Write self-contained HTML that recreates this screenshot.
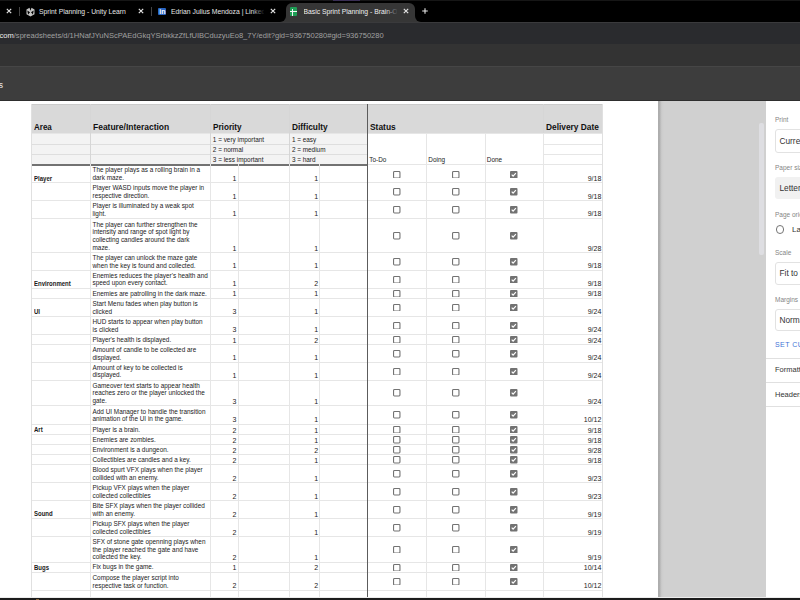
<!DOCTYPE html>
<html><head><meta charset="utf-8"><title>Print preview</title>
<style>
*{margin:0;padding:0;box-sizing:border-box}
html,body{width:800px;height:600px;overflow:hidden;background:#fff}
body{position:relative;font-family:"Liberation Sans",sans-serif}
.a{position:absolute}
.t{position:absolute;white-space:nowrap;overflow:visible}
.cbx{width:7.4px;height:7.4px;border:1.1px solid #7a7a7a;border-radius:1.2px;background:#fff}
.cbx.on{background:#6b6b6b;border-color:#6b6b6b}
</style></head>
<body>
<!-- tab strip -->
<div class="a" style="left:0;top:0;width:800px;height:22px;background:#000"></div>
<div class="a" style="left:0;top:0;width:800px;height:1px;background:#161616"></div>
<div class="a" style="left:333px;top:0;width:27px;height:1px;background:#3a2f55"></div>
<!-- active tab -->
<div class="a" style="left:286px;top:3px;width:128.5px;height:19.5px;background:#363636;border-radius:6px 6px 0 0"></div>
<div class="a" style="left:280px;top:16px;width:6px;height:6px;background:#363636"></div>
<div class="a" style="left:280px;top:16px;width:6px;height:6px;background:#000;border-radius:0 0 6px 0"></div>
<div class="a" style="left:414.5px;top:16px;width:6px;height:6px;background:#363636"></div>
<div class="a" style="left:414.5px;top:16px;width:6px;height:6px;background:#000;border-radius:0 0 0 6px"></div>
<!-- tab 1 -->
<svg class="a" style="left:6px;top:8.3px" width="6" height="6" viewBox="0 0 6 6"><path d="M0.8 0.8 L5.2 5.2 M5.2 0.8 L0.8 5.2" stroke="#e4e4e4" stroke-width="1.15"/></svg>
<div class="a" style="left:19px;top:7px;width:1px;height:9px;background:#444"></div>
<svg class="a" style="left:25.6px;top:6.5px" width="9" height="10" viewBox="0 0 9 10"><path fill="#c4c4c4" fill-rule="evenodd" d="M3.5 0.8 L0.5 2.5 L0.5 7.2 L4.5 9.5 L8.5 7.2 L8.5 2.5 L5.5 0.8 L4.5 3.7 Z M1.3 3.5 L4.0 5.2 L2.1 7.4 Z M7.7 3.5 L5.0 5.2 L6.9 7.4 Z"/></svg>
<div class="t" style="left:39px;top:6.6px;font-size:6.8px;line-height:10px;color:#e6e6e6">Sprint Planning - Unity Learn</div>
<svg class="a" style="left:138px;top:8.3px" width="6" height="6" viewBox="0 0 6 6"><path d="M0.8 0.8 L5.2 5.2 M5.2 0.8 L0.8 5.2" stroke="#e4e4e4" stroke-width="1.15"/></svg>
<div class="a" style="left:151px;top:7px;width:1px;height:9px;background:#444"></div>
<!-- linkedin -->
<div class="a" style="left:158px;top:7.5px;width:8px;height:7.5px;background:#2a66c2;border-radius:1px"></div>
<div class="t" style="left:159.2px;top:6.8px;font-size:7px;line-height:9px;color:#fff;font-weight:bold">in</div>
<div class="t" style="left:171px;top:6.6px;font-size:6.8px;line-height:10px;color:#e6e6e6;width:93px;overflow:hidden">Edrian Julius Mendoza | LinkedIn</div>
<div class="a" style="left:252px;top:5px;width:13px;height:13px;background:linear-gradient(90deg,rgba(0,0,0,0),#000)"></div>
<svg class="a" style="left:270px;top:8.3px" width="6" height="6" viewBox="0 0 6 6"><path d="M0.8 0.8 L5.2 5.2 M5.2 0.8 L0.8 5.2" stroke="#e4e4e4" stroke-width="1.15"/></svg>
<!-- sheets icon -->
<div class="a" style="left:289.5px;top:7px;width:7.5px;height:9px;background:#1e9e55;border-radius:1px"></div>
<div class="a" style="left:289.5px;top:11px;width:7.5px;height:1.1px;background:#f4f4f4"></div>
<div class="a" style="left:292.2px;top:8.5px;width:1.1px;height:7px;background:#f4f4f4"></div>
<div class="t" style="left:303.5px;top:6.6px;font-size:6.8px;line-height:10px;color:#f0f0f0;width:93px;overflow:hidden">Basic Sprint Planning - Brain-Out</div>
<div class="a" style="left:386px;top:5px;width:12px;height:13px;background:linear-gradient(90deg,rgba(54,54,54,0),#363636)"></div>
<svg class="a" style="left:402.5px;top:8px" width="6" height="6" viewBox="0 0 6 6"><path d="M0.8 0.8 L5.2 5.2 M5.2 0.8 L0.8 5.2" stroke="#e4e4e4" stroke-width="1.15"/></svg>
<svg class="a" style="left:422.4px;top:8px" width="6" height="6" viewBox="0 0 6 6"><path d="M0.2 3 L5.8 3 M3 0.2 L3 5.8" stroke="#e8e8e8" stroke-width="1.1"/></svg>
<!-- address row -->
<div class="a" style="left:0;top:22px;width:800px;height:21.5px;background:#2a2b2e"></div>
<div class="a" style="left:0;top:21.5px;width:800px;height:1.2px;background:#3a3a3c"></div>
<div class="t" style="left:-0.5px;top:31px;font-size:7.55px;line-height:9px;color:#a0a0a0"><span style="color:#f0f0f0">com</span>/spreadsheets/d/1HNafJYuNScPAEdGkqYSrbkkzZfLfUIBCduzyuEo8_7Y/edit?gid=936750280#gid=936750280</div>
<!-- bookmarks row -->
<div class="a" style="left:0;top:43.5px;width:800px;height:22.5px;background:#333333"></div>
<!-- sheets print header -->
<div class="a" style="left:0;top:66px;width:800px;height:34.5px;background:#3d3d3d"></div>
<div class="a" style="left:0;top:65.5px;width:800px;height:1.2px;background:#464646"></div>
<div class="a" style="left:0;top:99.5px;width:800px;height:1.2px;background:#2e2e2e"></div>
<div class="t" style="left:-1.2px;top:79.5px;font-size:8.5px;line-height:10px;color:#eee">s</div>
<!-- gray preview area & panel -->
<div class="a" style="left:658px;top:100.7px;width:108px;height:497px;background:#d0d0d0"></div>
<div class="a" style="left:658px;top:100.7px;width:6px;height:497px;background:linear-gradient(90deg,#acacac 0,#b0b0b0 1.8px,#c6c6c6 3px,#cdcdcd 4.5px,#d0d0d0 6px)"></div>
<div class="a" style="left:758.5px;top:123px;width:5.5px;height:132px;background:#dedee2;border-radius:2px"></div>
<div class="a" style="left:766px;top:100.7px;width:34px;height:497px;background:#fff"></div>
<div class="t" style="left:775px;top:116px;font-size:6.5px;line-height:8px;color:#858585">Print</div>
<div class="a" style="left:775px;top:129px;width:40px;height:23.5px;border:1px solid #e2e2e2;border-radius:3px;background:#fff"></div>
<div class="t" style="left:779.5px;top:136px;font-size:8.3px;line-height:10px;color:#333">Current sheet</div>
<div class="t" style="left:775px;top:164px;font-size:6.5px;line-height:8px;color:#858585">Paper size</div>
<div class="a" style="left:775px;top:176.5px;width:40px;height:22.5px;border-radius:3px;background:#f1f1f1"></div>
<div class="t" style="left:779.5px;top:183px;font-size:8.3px;line-height:10px;color:#333">Letter (8.5" x 11")</div>
<div class="t" style="left:775px;top:211px;font-size:6.5px;line-height:8px;color:#858585">Page orientation</div>
<div class="a" style="left:775.8px;top:225.2px;width:8.6px;height:8.6px;border:1px solid #757575;border-radius:50%"></div>
<div class="t" style="left:792px;top:224.5px;font-size:8px;line-height:10px;color:#333">Landscape</div>
<div class="t" style="left:775px;top:249px;font-size:6.5px;line-height:8px;color:#858585">Scale</div>
<div class="a" style="left:775px;top:261.5px;width:40px;height:23px;border:1px solid #e2e2e2;border-radius:3px;background:#fff"></div>
<div class="t" style="left:779.5px;top:268px;font-size:8.3px;line-height:10px;color:#333">Fit to width</div>
<div class="t" style="left:775px;top:296px;font-size:6.5px;line-height:8px;color:#858585">Margins</div>
<div class="a" style="left:775px;top:308.5px;width:40px;height:22.5px;border:1px solid #e2e2e2;border-radius:3px;background:#fff"></div>
<div class="t" style="left:779.5px;top:315px;font-size:8.3px;line-height:10px;color:#333">Normal</div>
<div class="t" style="left:775px;top:339.5px;font-size:7px;line-height:9px;color:#3f74d6;letter-spacing:0.45px">SET CUSTOM</div>
<div class="a" style="left:766px;top:357.5px;width:34px;height:1px;background:#e0e0e0"></div>
<div class="t" style="left:775px;top:365px;font-size:7.5px;line-height:9px;color:#333">Formatting</div>
<div class="a" style="left:766px;top:381.5px;width:34px;height:1px;background:#e0e0e0"></div>
<div class="t" style="left:775px;top:389.5px;font-size:7.5px;line-height:9px;color:#333">Headers</div>
<div class="a" style="left:766px;top:405.5px;width:34px;height:1px;background:#e0e0e0"></div>
<!-- bottom taskbar -->
<div class="a" style="left:0;top:597px;width:800px;height:1px;background:#ececec;z-index:10"></div>
<div class="a" style="left:0;top:598px;width:800px;height:2px;background:#1c1c1c;z-index:10"></div>
<div class="a" style="left:36px;top:598.5px;width:3px;height:2px;background:#8a6a40;z-index:11"></div>

<div class="a" style="left:31.3px;top:104.3px;width:571.5px;height:28.7px;background:#d9d9d9;"></div>
<div class="a" style="left:31.3px;top:133px;width:336.2px;height:31.1px;background:#f3f3f3;"></div>
<div class="a" style="left:31.3px;top:104.3px;width:571.5px;height:0.8px;background:#cbcbcb;"></div>
<div class="a" style="left:31.3px;top:143.75px;width:336.2px;height:1px;background:#dedede;"></div>
<div class="a" style="left:543.4px;top:143.75px;width:59.4px;height:1px;background:#e6e6e6;"></div>
<div class="a" style="left:31.3px;top:153.65px;width:336.2px;height:1px;background:#dedede;"></div>
<div class="a" style="left:543.4px;top:153.65px;width:59.4px;height:1px;background:#e6e6e6;"></div>
<div class="a" style="left:31.3px;top:132.5px;width:571.5px;height:1px;background:#e6e6e6;"></div>
<div class="a" style="left:31.3px;top:182.45px;width:571.5px;height:1px;background:#e6e6e6;"></div>
<div class="a" style="left:31.3px;top:200px;width:571.5px;height:1px;background:#e6e6e6;"></div>
<div class="a" style="left:31.3px;top:217.9px;width:571.5px;height:1px;background:#e6e6e6;"></div>
<div class="a" style="left:31.3px;top:252px;width:571.5px;height:1px;background:#e6e6e6;"></div>
<div class="a" style="left:31.3px;top:269.9px;width:571.5px;height:1px;background:#e6e6e6;"></div>
<div class="a" style="left:31.3px;top:287.7px;width:571.5px;height:1px;background:#e6e6e6;"></div>
<div class="a" style="left:31.3px;top:297.8px;width:571.5px;height:1px;background:#e6e6e6;"></div>
<div class="a" style="left:31.3px;top:315.9px;width:571.5px;height:1px;background:#e6e6e6;"></div>
<div class="a" style="left:31.3px;top:333.8px;width:571.5px;height:1px;background:#e6e6e6;"></div>
<div class="a" style="left:31.3px;top:344px;width:571.5px;height:1px;background:#e6e6e6;"></div>
<div class="a" style="left:31.3px;top:361.9px;width:571.5px;height:1px;background:#e6e6e6;"></div>
<div class="a" style="left:31.3px;top:379.5px;width:571.5px;height:1px;background:#e6e6e6;"></div>
<div class="a" style="left:31.3px;top:405.2px;width:571.5px;height:1px;background:#e6e6e6;"></div>
<div class="a" style="left:31.3px;top:423.6px;width:571.5px;height:1px;background:#e6e6e6;"></div>
<div class="a" style="left:31.3px;top:434px;width:571.5px;height:1px;background:#e6e6e6;"></div>
<div class="a" style="left:31.3px;top:444.1px;width:571.5px;height:1px;background:#e6e6e6;"></div>
<div class="a" style="left:31.3px;top:454.2px;width:571.5px;height:1px;background:#e6e6e6;"></div>
<div class="a" style="left:31.3px;top:464.2px;width:571.5px;height:1px;background:#e6e6e6;"></div>
<div class="a" style="left:31.3px;top:482px;width:571.5px;height:1px;background:#e6e6e6;"></div>
<div class="a" style="left:31.3px;top:500px;width:571.5px;height:1px;background:#e6e6e6;"></div>
<div class="a" style="left:31.3px;top:518.1px;width:571.5px;height:1px;background:#e6e6e6;"></div>
<div class="a" style="left:31.3px;top:536.1px;width:571.5px;height:1px;background:#e6e6e6;"></div>
<div class="a" style="left:31.3px;top:561.5px;width:571.5px;height:1px;background:#e6e6e6;"></div>
<div class="a" style="left:31.3px;top:571.7px;width:571.5px;height:1px;background:#e6e6e6;"></div>
<div class="a" style="left:31.3px;top:589.8px;width:571.5px;height:1px;background:#e6e6e6;"></div>
<div class="a" style="left:31.3px;top:607.7px;width:571.5px;height:1px;background:#e6e6e6;"></div>
<div class="a" style="left:367.5px;top:163.6px;width:235.3px;height:1px;background:#e6e6e6;"></div>
<div class="a" style="left:31.3px;top:164.1px;width:336.2px;height:1.6px;background:#727272;"></div>
<div class="a" style="left:30.8px;top:104.3px;width:1px;height:503.7px;background:#e0e0e0;"></div>
<div class="a" style="left:89.8px;top:164.1px;width:1px;height:443.9px;background:#e6e6e6;"></div>
<div class="a" style="left:209.8px;top:164.1px;width:1px;height:443.9px;background:#e6e6e6;"></div>
<div class="a" style="left:288.9px;top:164.1px;width:1px;height:443.9px;background:#e6e6e6;"></div>
<div class="a" style="left:89.8px;top:104.3px;width:1px;height:59.8px;background:#d6d6d6;"></div>
<div class="a" style="left:209.8px;top:104.3px;width:1px;height:59.8px;background:#d6d6d6;"></div>
<div class="a" style="left:288.9px;top:104.3px;width:1px;height:59.8px;background:#d6d6d6;"></div>
<div class="a" style="left:237.6px;top:164.1px;width:1px;height:443.9px;background:#e6e6e6;"></div>
<div class="a" style="left:319.3px;top:164.1px;width:1px;height:443.9px;background:#e6e6e6;"></div>
<div class="a" style="left:426px;top:133px;width:1px;height:475px;background:#e6e6e6;"></div>
<div class="a" style="left:484.5px;top:133px;width:1px;height:475px;background:#e6e6e6;"></div>
<div class="a" style="left:542.9px;top:133px;width:1px;height:475px;background:#e6e6e6;"></div>
<div class="a" style="left:542.9px;top:104.3px;width:1px;height:28.7px;background:#d6d6d6;"></div>
<div class="a" style="left:602.3px;top:104.3px;width:1px;height:503.7px;background:#e0e0e0;"></div>
<div class="a" style="left:366.85px;top:104.3px;width:1.3px;height:503.7px;background:#5c5c5c;"></div>
<div class="t" style="left:33.7px;top:121.7px;font-size:8.6px;line-height:10px;color:#111;transform:scaleX(0.93);transform-origin:0 0;font-weight:bold;">Area</div>
<div class="t" style="left:92.7px;top:121.7px;font-size:8.6px;line-height:10px;color:#111;transform:scaleX(0.985);transform-origin:0 0;font-weight:bold;">Feature/Interaction</div>
<div class="t" style="left:212.7px;top:121.7px;font-size:8.6px;line-height:10px;color:#111;transform:scaleX(0.95);transform-origin:0 0;font-weight:bold;">Priority</div>
<div class="t" style="left:291.8px;top:121.7px;font-size:8.6px;line-height:10px;color:#111;transform:scaleX(0.97);transform-origin:0 0;font-weight:bold;">Difficulty</div>
<div class="t" style="left:369.9px;top:121.7px;font-size:8.6px;line-height:10px;color:#111;transform:scaleX(0.98);transform-origin:0 0;font-weight:bold;">Status</div>
<div class="t" style="left:545.8px;top:121.7px;font-size:8.6px;line-height:10px;color:#111;transform:scaleX(0.97);transform-origin:0 0;font-weight:bold;">Delivery Date</div>
<div class="t" style="left:212.8px;top:135.05px;font-size:6.4px;line-height:10px;color:#222;">1 = very important</div>
<div class="t" style="left:291.9px;top:135.05px;font-size:6.4px;line-height:10px;color:#222;">1 = easy</div>
<div class="t" style="left:212.8px;top:144.95px;font-size:6.4px;line-height:10px;color:#222;">2 = normal</div>
<div class="t" style="left:291.9px;top:144.95px;font-size:6.4px;line-height:10px;color:#222;">2 = medium</div>
<div class="t" style="left:212.8px;top:154.9px;font-size:6.4px;line-height:10px;color:#222;">3 = less important</div>
<div class="t" style="left:291.9px;top:154.9px;font-size:6.4px;line-height:10px;color:#222;">3 = hard</div>
<div class="t" style="left:369.3px;top:155.4px;font-size:6.4px;line-height:10px;color:#222;">To-Do</div>
<div class="t" style="left:428.3px;top:155.4px;font-size:6.4px;line-height:10px;color:#222;">Doing</div>
<div class="t" style="left:486.8px;top:155.4px;font-size:6.4px;line-height:10px;color:#222;">Done</div>
<div class="t" style="left:33.8px;top:173.55px;font-size:7.0px;line-height:10px;color:#1a1a1a;transform:scaleX(0.86);transform-origin:0 0;font-weight:bold;">Player</div>
<div class="t" style="left:92.5px;top:165.45px;font-size:6.4px;line-height:10px;color:#222;">The player plays as a rolling brain in a</div>
<div class="t" style="left:92.5px;top:173.15px;font-size:6.4px;line-height:10px;color:#222;">dark maze.</div>
<div class="t" style="right:563.5px;top:173.95px;font-size:7.0px;line-height:10px;color:#222;">1</div>
<div class="t" style="right:481.8px;top:173.95px;font-size:7.0px;line-height:10px;color:#222;">1</div>
<div class="t" style="right:198.7px;top:173.95px;font-size:7.0px;line-height:10px;color:#222;">9/18</div>
<svg class="a" style="left:393.25px;top:170.57px" width="7.5" height="7.5" viewBox="0 0 7.5 7.5"><rect x="0.55" y="0.55" width="6.4" height="6.4" rx="0.9" fill="none" stroke="#737373" stroke-width="1.1"/></svg>
<svg class="a" style="left:452px;top:170.57px" width="7.5" height="7.5" viewBox="0 0 7.5 7.5"><rect x="0.55" y="0.55" width="6.4" height="6.4" rx="0.9" fill="none" stroke="#737373" stroke-width="1.1"/></svg>
<svg class="a" style="left:510.45px;top:170.57px" width="7.5" height="7.5" viewBox="0 0 7.5 7.5"><rect x="0" y="0" width="7.5" height="7.5" rx="1" fill="#727272"/><path d="M1.7 3.7 L3.1 5.1 L5.9 2.2" stroke="#fff" stroke-width="1.15" fill="none"/></svg>
<div class="t" style="left:92.5px;top:183px;font-size:6.4px;line-height:10px;color:#222;">Player WASD inputs move the player in</div>
<div class="t" style="left:92.5px;top:190.7px;font-size:6.4px;line-height:10px;color:#222;">respective direction.</div>
<div class="t" style="right:563.5px;top:191.5px;font-size:7.0px;line-height:10px;color:#222;">1</div>
<div class="t" style="right:481.8px;top:191.5px;font-size:7.0px;line-height:10px;color:#222;">1</div>
<div class="t" style="right:198.7px;top:191.5px;font-size:7.0px;line-height:10px;color:#222;">9/18</div>
<svg class="a" style="left:393.25px;top:188.28px" width="7.5" height="7.5" viewBox="0 0 7.5 7.5"><rect x="0.55" y="0.55" width="6.4" height="6.4" rx="0.9" fill="none" stroke="#737373" stroke-width="1.1"/></svg>
<svg class="a" style="left:452px;top:188.28px" width="7.5" height="7.5" viewBox="0 0 7.5 7.5"><rect x="0.55" y="0.55" width="6.4" height="6.4" rx="0.9" fill="none" stroke="#737373" stroke-width="1.1"/></svg>
<svg class="a" style="left:510.45px;top:188.28px" width="7.5" height="7.5" viewBox="0 0 7.5 7.5"><rect x="0" y="0" width="7.5" height="7.5" rx="1" fill="#727272"/><path d="M1.7 3.7 L3.1 5.1 L5.9 2.2" stroke="#fff" stroke-width="1.15" fill="none"/></svg>
<div class="t" style="left:92.5px;top:200.9px;font-size:6.4px;line-height:10px;color:#222;">Player is illuminated by a weak spot</div>
<div class="t" style="left:92.5px;top:208.6px;font-size:6.4px;line-height:10px;color:#222;">light.</div>
<div class="t" style="right:563.5px;top:209.4px;font-size:7.0px;line-height:10px;color:#222;">1</div>
<div class="t" style="right:481.8px;top:209.4px;font-size:7.0px;line-height:10px;color:#222;">1</div>
<div class="t" style="right:198.7px;top:209.4px;font-size:7.0px;line-height:10px;color:#222;">9/18</div>
<svg class="a" style="left:393.25px;top:206px" width="7.5" height="7.5" viewBox="0 0 7.5 7.5"><rect x="0.55" y="0.55" width="6.4" height="6.4" rx="0.9" fill="none" stroke="#737373" stroke-width="1.1"/></svg>
<svg class="a" style="left:452px;top:206px" width="7.5" height="7.5" viewBox="0 0 7.5 7.5"><rect x="0.55" y="0.55" width="6.4" height="6.4" rx="0.9" fill="none" stroke="#737373" stroke-width="1.1"/></svg>
<svg class="a" style="left:510.45px;top:206px" width="7.5" height="7.5" viewBox="0 0 7.5 7.5"><rect x="0" y="0" width="7.5" height="7.5" rx="1" fill="#727272"/><path d="M1.7 3.7 L3.1 5.1 L5.9 2.2" stroke="#fff" stroke-width="1.15" fill="none"/></svg>
<div class="t" style="left:92.5px;top:219.6px;font-size:6.4px;line-height:10px;color:#222;">The player can further strengthen the</div>
<div class="t" style="left:92.5px;top:227.3px;font-size:6.4px;line-height:10px;color:#222;">intensity and range of spot light by</div>
<div class="t" style="left:92.5px;top:235px;font-size:6.4px;line-height:10px;color:#222;">collecting candles around the dark</div>
<div class="t" style="left:92.5px;top:242.7px;font-size:6.4px;line-height:10px;color:#222;">maze.</div>
<div class="t" style="right:563.5px;top:243.5px;font-size:7.0px;line-height:10px;color:#222;">1</div>
<div class="t" style="right:481.8px;top:243.5px;font-size:7.0px;line-height:10px;color:#222;">1</div>
<div class="t" style="right:198.7px;top:243.5px;font-size:7.0px;line-height:10px;color:#222;">9/28</div>
<svg class="a" style="left:393.25px;top:232px" width="7.5" height="7.5" viewBox="0 0 7.5 7.5"><rect x="0.55" y="0.55" width="6.4" height="6.4" rx="0.9" fill="none" stroke="#737373" stroke-width="1.1"/></svg>
<svg class="a" style="left:452px;top:232px" width="7.5" height="7.5" viewBox="0 0 7.5 7.5"><rect x="0.55" y="0.55" width="6.4" height="6.4" rx="0.9" fill="none" stroke="#737373" stroke-width="1.1"/></svg>
<svg class="a" style="left:510.45px;top:232px" width="7.5" height="7.5" viewBox="0 0 7.5 7.5"><rect x="0" y="0" width="7.5" height="7.5" rx="1" fill="#727272"/><path d="M1.7 3.7 L3.1 5.1 L5.9 2.2" stroke="#fff" stroke-width="1.15" fill="none"/></svg>
<div class="t" style="left:92.5px;top:252.9px;font-size:6.4px;line-height:10px;color:#222;">The player can unlock the maze gate</div>
<div class="t" style="left:92.5px;top:260.6px;font-size:6.4px;line-height:10px;color:#222;">when the key is found and collected.</div>
<div class="t" style="right:563.5px;top:261.4px;font-size:7.0px;line-height:10px;color:#222;">1</div>
<div class="t" style="right:481.8px;top:261.4px;font-size:7.0px;line-height:10px;color:#222;">1</div>
<div class="t" style="right:198.7px;top:261.4px;font-size:7.0px;line-height:10px;color:#222;">9/18</div>
<svg class="a" style="left:393.25px;top:258px" width="7.5" height="7.5" viewBox="0 0 7.5 7.5"><rect x="0.55" y="0.55" width="6.4" height="6.4" rx="0.9" fill="none" stroke="#737373" stroke-width="1.1"/></svg>
<svg class="a" style="left:452px;top:258px" width="7.5" height="7.5" viewBox="0 0 7.5 7.5"><rect x="0.55" y="0.55" width="6.4" height="6.4" rx="0.9" fill="none" stroke="#737373" stroke-width="1.1"/></svg>
<svg class="a" style="left:510.45px;top:258px" width="7.5" height="7.5" viewBox="0 0 7.5 7.5"><rect x="0" y="0" width="7.5" height="7.5" rx="1" fill="#727272"/><path d="M1.7 3.7 L3.1 5.1 L5.9 2.2" stroke="#fff" stroke-width="1.15" fill="none"/></svg>
<div class="t" style="left:33.8px;top:278.8px;font-size:7.0px;line-height:10px;color:#1a1a1a;transform:scaleX(0.86);transform-origin:0 0;font-weight:bold;">Environment</div>
<div class="t" style="left:92.5px;top:270.7px;font-size:6.4px;line-height:10px;color:#222;">Enemies reduces the player's health and</div>
<div class="t" style="left:92.5px;top:278.4px;font-size:6.4px;line-height:10px;color:#222;">speed upon every contact.</div>
<div class="t" style="right:563.5px;top:279.2px;font-size:7.0px;line-height:10px;color:#222;">1</div>
<div class="t" style="right:481.8px;top:279.2px;font-size:7.0px;line-height:10px;color:#222;">2</div>
<div class="t" style="right:198.7px;top:279.2px;font-size:7.0px;line-height:10px;color:#222;">9/18</div>
<svg class="a" style="left:393.25px;top:275.85px" width="7.5" height="7.5" viewBox="0 0 7.5 7.5"><rect x="0.55" y="0.55" width="6.4" height="6.4" rx="0.9" fill="none" stroke="#737373" stroke-width="1.1"/></svg>
<svg class="a" style="left:452px;top:275.85px" width="7.5" height="7.5" viewBox="0 0 7.5 7.5"><rect x="0.55" y="0.55" width="6.4" height="6.4" rx="0.9" fill="none" stroke="#737373" stroke-width="1.1"/></svg>
<svg class="a" style="left:510.45px;top:275.85px" width="7.5" height="7.5" viewBox="0 0 7.5 7.5"><rect x="0" y="0" width="7.5" height="7.5" rx="1" fill="#727272"/><path d="M1.7 3.7 L3.1 5.1 L5.9 2.2" stroke="#fff" stroke-width="1.15" fill="none"/></svg>
<div class="t" style="left:92.5px;top:288.5px;font-size:6.4px;line-height:10px;color:#222;">Enemies are patrolling in the dark maze.</div>
<div class="t" style="right:563.5px;top:289.3px;font-size:7.0px;line-height:10px;color:#222;">1</div>
<div class="t" style="right:481.8px;top:289.3px;font-size:7.0px;line-height:10px;color:#222;">1</div>
<div class="t" style="right:198.7px;top:289.3px;font-size:7.0px;line-height:10px;color:#222;">9/18</div>
<svg class="a" style="left:393.25px;top:289.8px" width="7.5" height="7.5" viewBox="0 0 7.5 7.5"><rect x="0.55" y="0.55" width="6.4" height="6.4" rx="0.9" fill="none" stroke="#737373" stroke-width="1.1"/></svg>
<svg class="a" style="left:452px;top:289.8px" width="7.5" height="7.5" viewBox="0 0 7.5 7.5"><rect x="0.55" y="0.55" width="6.4" height="6.4" rx="0.9" fill="none" stroke="#737373" stroke-width="1.1"/></svg>
<svg class="a" style="left:510.45px;top:289.8px" width="7.5" height="7.5" viewBox="0 0 7.5 7.5"><rect x="0" y="0" width="7.5" height="7.5" rx="1" fill="#727272"/><path d="M1.7 3.7 L3.1 5.1 L5.9 2.2" stroke="#fff" stroke-width="1.15" fill="none"/></svg>
<div class="t" style="left:33.8px;top:307px;font-size:7.0px;line-height:10px;color:#1a1a1a;transform:scaleX(0.86);transform-origin:0 0;font-weight:bold;">UI</div>
<div class="t" style="left:92.5px;top:298.9px;font-size:6.4px;line-height:10px;color:#222;">Start Menu fades when play button is</div>
<div class="t" style="left:92.5px;top:306.6px;font-size:6.4px;line-height:10px;color:#222;">clicked</div>
<div class="t" style="right:563.5px;top:307.4px;font-size:7.0px;line-height:10px;color:#222;">3</div>
<div class="t" style="right:481.8px;top:307.4px;font-size:7.0px;line-height:10px;color:#222;">1</div>
<div class="t" style="right:198.7px;top:307.4px;font-size:7.0px;line-height:10px;color:#222;">9/24</div>
<svg class="a" style="left:393.25px;top:303.9px" width="7.5" height="7.5" viewBox="0 0 7.5 7.5"><rect x="0.55" y="0.55" width="6.4" height="6.4" rx="0.9" fill="none" stroke="#737373" stroke-width="1.1"/></svg>
<svg class="a" style="left:452px;top:303.9px" width="7.5" height="7.5" viewBox="0 0 7.5 7.5"><rect x="0.55" y="0.55" width="6.4" height="6.4" rx="0.9" fill="none" stroke="#737373" stroke-width="1.1"/></svg>
<svg class="a" style="left:510.45px;top:303.9px" width="7.5" height="7.5" viewBox="0 0 7.5 7.5"><rect x="0" y="0" width="7.5" height="7.5" rx="1" fill="#727272"/><path d="M1.7 3.7 L3.1 5.1 L5.9 2.2" stroke="#fff" stroke-width="1.15" fill="none"/></svg>
<div class="t" style="left:92.5px;top:316.8px;font-size:6.4px;line-height:10px;color:#222;">HUD starts to appear when play button</div>
<div class="t" style="left:92.5px;top:324.5px;font-size:6.4px;line-height:10px;color:#222;">is clicked</div>
<div class="t" style="right:563.5px;top:325.3px;font-size:7.0px;line-height:10px;color:#222;">3</div>
<div class="t" style="right:481.8px;top:325.3px;font-size:7.0px;line-height:10px;color:#222;">1</div>
<div class="t" style="right:198.7px;top:325.3px;font-size:7.0px;line-height:10px;color:#222;">9/24</div>
<svg class="a" style="left:393.25px;top:321.9px" width="7.5" height="7.5" viewBox="0 0 7.5 7.5"><rect x="0.55" y="0.55" width="6.4" height="6.4" rx="0.9" fill="none" stroke="#737373" stroke-width="1.1"/></svg>
<svg class="a" style="left:452px;top:321.9px" width="7.5" height="7.5" viewBox="0 0 7.5 7.5"><rect x="0.55" y="0.55" width="6.4" height="6.4" rx="0.9" fill="none" stroke="#737373" stroke-width="1.1"/></svg>
<svg class="a" style="left:510.45px;top:321.9px" width="7.5" height="7.5" viewBox="0 0 7.5 7.5"><rect x="0" y="0" width="7.5" height="7.5" rx="1" fill="#727272"/><path d="M1.7 3.7 L3.1 5.1 L5.9 2.2" stroke="#fff" stroke-width="1.15" fill="none"/></svg>
<div class="t" style="left:92.5px;top:334.7px;font-size:6.4px;line-height:10px;color:#222;">Player's health is displayed.</div>
<div class="t" style="right:563.5px;top:335.5px;font-size:7.0px;line-height:10px;color:#222;">1</div>
<div class="t" style="right:481.8px;top:335.5px;font-size:7.0px;line-height:10px;color:#222;">2</div>
<div class="t" style="right:198.7px;top:335.5px;font-size:7.0px;line-height:10px;color:#222;">9/24</div>
<svg class="a" style="left:393.25px;top:335.95px" width="7.5" height="7.5" viewBox="0 0 7.5 7.5"><rect x="0.55" y="0.55" width="6.4" height="6.4" rx="0.9" fill="none" stroke="#737373" stroke-width="1.1"/></svg>
<svg class="a" style="left:452px;top:335.95px" width="7.5" height="7.5" viewBox="0 0 7.5 7.5"><rect x="0.55" y="0.55" width="6.4" height="6.4" rx="0.9" fill="none" stroke="#737373" stroke-width="1.1"/></svg>
<svg class="a" style="left:510.45px;top:335.95px" width="7.5" height="7.5" viewBox="0 0 7.5 7.5"><rect x="0" y="0" width="7.5" height="7.5" rx="1" fill="#727272"/><path d="M1.7 3.7 L3.1 5.1 L5.9 2.2" stroke="#fff" stroke-width="1.15" fill="none"/></svg>
<div class="t" style="left:92.5px;top:344.9px;font-size:6.4px;line-height:10px;color:#222;">Amount of candle to be collected are</div>
<div class="t" style="left:92.5px;top:352.6px;font-size:6.4px;line-height:10px;color:#222;">displayed.</div>
<div class="t" style="right:563.5px;top:353.4px;font-size:7.0px;line-height:10px;color:#222;">1</div>
<div class="t" style="right:481.8px;top:353.4px;font-size:7.0px;line-height:10px;color:#222;">1</div>
<div class="t" style="right:198.7px;top:353.4px;font-size:7.0px;line-height:10px;color:#222;">9/24</div>
<svg class="a" style="left:393.25px;top:350px" width="7.5" height="7.5" viewBox="0 0 7.5 7.5"><rect x="0.55" y="0.55" width="6.4" height="6.4" rx="0.9" fill="none" stroke="#737373" stroke-width="1.1"/></svg>
<svg class="a" style="left:452px;top:350px" width="7.5" height="7.5" viewBox="0 0 7.5 7.5"><rect x="0.55" y="0.55" width="6.4" height="6.4" rx="0.9" fill="none" stroke="#737373" stroke-width="1.1"/></svg>
<svg class="a" style="left:510.45px;top:350px" width="7.5" height="7.5" viewBox="0 0 7.5 7.5"><rect x="0" y="0" width="7.5" height="7.5" rx="1" fill="#727272"/><path d="M1.7 3.7 L3.1 5.1 L5.9 2.2" stroke="#fff" stroke-width="1.15" fill="none"/></svg>
<div class="t" style="left:92.5px;top:362.5px;font-size:6.4px;line-height:10px;color:#222;">Amount of key to be collected is</div>
<div class="t" style="left:92.5px;top:370.2px;font-size:6.4px;line-height:10px;color:#222;">displayed.</div>
<div class="t" style="right:563.5px;top:371px;font-size:7.0px;line-height:10px;color:#222;">1</div>
<div class="t" style="right:481.8px;top:371px;font-size:7.0px;line-height:10px;color:#222;">1</div>
<div class="t" style="right:198.7px;top:371px;font-size:7.0px;line-height:10px;color:#222;">9/24</div>
<svg class="a" style="left:393.25px;top:367.75px" width="7.5" height="7.5" viewBox="0 0 7.5 7.5"><rect x="0.55" y="0.55" width="6.4" height="6.4" rx="0.9" fill="none" stroke="#737373" stroke-width="1.1"/></svg>
<svg class="a" style="left:452px;top:367.75px" width="7.5" height="7.5" viewBox="0 0 7.5 7.5"><rect x="0.55" y="0.55" width="6.4" height="6.4" rx="0.9" fill="none" stroke="#737373" stroke-width="1.1"/></svg>
<svg class="a" style="left:510.45px;top:367.75px" width="7.5" height="7.5" viewBox="0 0 7.5 7.5"><rect x="0" y="0" width="7.5" height="7.5" rx="1" fill="#727272"/><path d="M1.7 3.7 L3.1 5.1 L5.9 2.2" stroke="#fff" stroke-width="1.15" fill="none"/></svg>
<div class="t" style="left:92.5px;top:380.5px;font-size:6.4px;line-height:10px;color:#222;">Gameover text starts to appear health</div>
<div class="t" style="left:92.5px;top:388.2px;font-size:6.4px;line-height:10px;color:#222;">reaches zero or the player unlocked the</div>
<div class="t" style="left:92.5px;top:395.9px;font-size:6.4px;line-height:10px;color:#222;">gate.</div>
<div class="t" style="right:563.5px;top:396.7px;font-size:7.0px;line-height:10px;color:#222;">3</div>
<div class="t" style="right:481.8px;top:396.7px;font-size:7.0px;line-height:10px;color:#222;">1</div>
<div class="t" style="right:198.7px;top:396.7px;font-size:7.0px;line-height:10px;color:#222;">9/24</div>
<svg class="a" style="left:393.25px;top:389.4px" width="7.5" height="7.5" viewBox="0 0 7.5 7.5"><rect x="0.55" y="0.55" width="6.4" height="6.4" rx="0.9" fill="none" stroke="#737373" stroke-width="1.1"/></svg>
<svg class="a" style="left:452px;top:389.4px" width="7.5" height="7.5" viewBox="0 0 7.5 7.5"><rect x="0.55" y="0.55" width="6.4" height="6.4" rx="0.9" fill="none" stroke="#737373" stroke-width="1.1"/></svg>
<svg class="a" style="left:510.45px;top:389.4px" width="7.5" height="7.5" viewBox="0 0 7.5 7.5"><rect x="0" y="0" width="7.5" height="7.5" rx="1" fill="#727272"/><path d="M1.7 3.7 L3.1 5.1 L5.9 2.2" stroke="#fff" stroke-width="1.15" fill="none"/></svg>
<div class="t" style="left:92.5px;top:406.6px;font-size:6.4px;line-height:10px;color:#222;">Add UI Manager to handle the transition</div>
<div class="t" style="left:92.5px;top:414.3px;font-size:6.4px;line-height:10px;color:#222;">animation of the UI in the game.</div>
<div class="t" style="right:563.5px;top:415.1px;font-size:7.0px;line-height:10px;color:#222;">3</div>
<div class="t" style="right:481.8px;top:415.1px;font-size:7.0px;line-height:10px;color:#222;">1</div>
<div class="t" style="right:198.7px;top:415.1px;font-size:7.0px;line-height:10px;color:#222;">10/12</div>
<svg class="a" style="left:393.25px;top:411.45px" width="7.5" height="7.5" viewBox="0 0 7.5 7.5"><rect x="0.55" y="0.55" width="6.4" height="6.4" rx="0.9" fill="none" stroke="#737373" stroke-width="1.1"/></svg>
<svg class="a" style="left:452px;top:411.45px" width="7.5" height="7.5" viewBox="0 0 7.5 7.5"><rect x="0.55" y="0.55" width="6.4" height="6.4" rx="0.9" fill="none" stroke="#737373" stroke-width="1.1"/></svg>
<svg class="a" style="left:510.45px;top:411.45px" width="7.5" height="7.5" viewBox="0 0 7.5 7.5"><rect x="0" y="0" width="7.5" height="7.5" rx="1" fill="#727272"/><path d="M1.7 3.7 L3.1 5.1 L5.9 2.2" stroke="#fff" stroke-width="1.15" fill="none"/></svg>
<div class="t" style="left:33.8px;top:425.1px;font-size:7.0px;line-height:10px;color:#1a1a1a;transform:scaleX(0.86);transform-origin:0 0;font-weight:bold;">Art</div>
<div class="t" style="left:92.5px;top:424.7px;font-size:6.4px;line-height:10px;color:#222;">Player is a brain.</div>
<div class="t" style="right:563.5px;top:425.5px;font-size:7.0px;line-height:10px;color:#222;">2</div>
<div class="t" style="right:481.8px;top:425.5px;font-size:7.0px;line-height:10px;color:#222;">1</div>
<div class="t" style="right:198.7px;top:425.5px;font-size:7.0px;line-height:10px;color:#222;">9/18</div>
<svg class="a" style="left:393.25px;top:425.85px" width="7.5" height="7.5" viewBox="0 0 7.5 7.5"><rect x="0.55" y="0.55" width="6.4" height="6.4" rx="0.9" fill="none" stroke="#737373" stroke-width="1.1"/></svg>
<svg class="a" style="left:452px;top:425.85px" width="7.5" height="7.5" viewBox="0 0 7.5 7.5"><rect x="0.55" y="0.55" width="6.4" height="6.4" rx="0.9" fill="none" stroke="#737373" stroke-width="1.1"/></svg>
<svg class="a" style="left:510.45px;top:425.85px" width="7.5" height="7.5" viewBox="0 0 7.5 7.5"><rect x="0" y="0" width="7.5" height="7.5" rx="1" fill="#727272"/><path d="M1.7 3.7 L3.1 5.1 L5.9 2.2" stroke="#fff" stroke-width="1.15" fill="none"/></svg>
<div class="t" style="left:92.5px;top:434.8px;font-size:6.4px;line-height:10px;color:#222;">Enemies are zombies.</div>
<div class="t" style="right:563.5px;top:435.6px;font-size:7.0px;line-height:10px;color:#222;">2</div>
<div class="t" style="right:481.8px;top:435.6px;font-size:7.0px;line-height:10px;color:#222;">1</div>
<div class="t" style="right:198.7px;top:435.6px;font-size:7.0px;line-height:10px;color:#222;">9/18</div>
<svg class="a" style="left:393.25px;top:436.1px" width="7.5" height="7.5" viewBox="0 0 7.5 7.5"><rect x="0.55" y="0.55" width="6.4" height="6.4" rx="0.9" fill="none" stroke="#737373" stroke-width="1.1"/></svg>
<svg class="a" style="left:452px;top:436.1px" width="7.5" height="7.5" viewBox="0 0 7.5 7.5"><rect x="0.55" y="0.55" width="6.4" height="6.4" rx="0.9" fill="none" stroke="#737373" stroke-width="1.1"/></svg>
<svg class="a" style="left:510.45px;top:436.1px" width="7.5" height="7.5" viewBox="0 0 7.5 7.5"><rect x="0" y="0" width="7.5" height="7.5" rx="1" fill="#727272"/><path d="M1.7 3.7 L3.1 5.1 L5.9 2.2" stroke="#fff" stroke-width="1.15" fill="none"/></svg>
<div class="t" style="left:92.5px;top:444.9px;font-size:6.4px;line-height:10px;color:#222;">Environment is a dungeon.</div>
<div class="t" style="right:563.5px;top:445.7px;font-size:7.0px;line-height:10px;color:#222;">2</div>
<div class="t" style="right:481.8px;top:445.7px;font-size:7.0px;line-height:10px;color:#222;">2</div>
<div class="t" style="right:198.7px;top:445.7px;font-size:7.0px;line-height:10px;color:#222;">9/28</div>
<svg class="a" style="left:393.25px;top:446.2px" width="7.5" height="7.5" viewBox="0 0 7.5 7.5"><rect x="0.55" y="0.55" width="6.4" height="6.4" rx="0.9" fill="none" stroke="#737373" stroke-width="1.1"/></svg>
<svg class="a" style="left:452px;top:446.2px" width="7.5" height="7.5" viewBox="0 0 7.5 7.5"><rect x="0.55" y="0.55" width="6.4" height="6.4" rx="0.9" fill="none" stroke="#737373" stroke-width="1.1"/></svg>
<svg class="a" style="left:510.45px;top:446.2px" width="7.5" height="7.5" viewBox="0 0 7.5 7.5"><rect x="0" y="0" width="7.5" height="7.5" rx="1" fill="#727272"/><path d="M1.7 3.7 L3.1 5.1 L5.9 2.2" stroke="#fff" stroke-width="1.15" fill="none"/></svg>
<div class="t" style="left:92.5px;top:454.9px;font-size:6.4px;line-height:10px;color:#222;">Collectibles are candles and a key.</div>
<div class="t" style="right:563.5px;top:455.7px;font-size:7.0px;line-height:10px;color:#222;">2</div>
<div class="t" style="right:481.8px;top:455.7px;font-size:7.0px;line-height:10px;color:#222;">1</div>
<div class="t" style="right:198.7px;top:455.7px;font-size:7.0px;line-height:10px;color:#222;">9/18</div>
<svg class="a" style="left:393.25px;top:456.25px" width="7.5" height="7.5" viewBox="0 0 7.5 7.5"><rect x="0.55" y="0.55" width="6.4" height="6.4" rx="0.9" fill="none" stroke="#737373" stroke-width="1.1"/></svg>
<svg class="a" style="left:452px;top:456.25px" width="7.5" height="7.5" viewBox="0 0 7.5 7.5"><rect x="0.55" y="0.55" width="6.4" height="6.4" rx="0.9" fill="none" stroke="#737373" stroke-width="1.1"/></svg>
<svg class="a" style="left:510.45px;top:456.25px" width="7.5" height="7.5" viewBox="0 0 7.5 7.5"><rect x="0" y="0" width="7.5" height="7.5" rx="1" fill="#727272"/><path d="M1.7 3.7 L3.1 5.1 L5.9 2.2" stroke="#fff" stroke-width="1.15" fill="none"/></svg>
<div class="t" style="left:92.5px;top:465px;font-size:6.4px;line-height:10px;color:#222;">Blood spurt VFX plays when the player</div>
<div class="t" style="left:92.5px;top:472.7px;font-size:6.4px;line-height:10px;color:#222;">collided with an enemy.</div>
<div class="t" style="right:563.5px;top:473.5px;font-size:7.0px;line-height:10px;color:#222;">2</div>
<div class="t" style="right:481.8px;top:473.5px;font-size:7.0px;line-height:10px;color:#222;">1</div>
<div class="t" style="right:198.7px;top:473.5px;font-size:7.0px;line-height:10px;color:#222;">9/23</div>
<svg class="a" style="left:393.25px;top:470.15px" width="7.5" height="7.5" viewBox="0 0 7.5 7.5"><rect x="0.55" y="0.55" width="6.4" height="6.4" rx="0.9" fill="none" stroke="#737373" stroke-width="1.1"/></svg>
<svg class="a" style="left:452px;top:470.15px" width="7.5" height="7.5" viewBox="0 0 7.5 7.5"><rect x="0.55" y="0.55" width="6.4" height="6.4" rx="0.9" fill="none" stroke="#737373" stroke-width="1.1"/></svg>
<svg class="a" style="left:510.45px;top:470.15px" width="7.5" height="7.5" viewBox="0 0 7.5 7.5"><rect x="0" y="0" width="7.5" height="7.5" rx="1" fill="#727272"/><path d="M1.7 3.7 L3.1 5.1 L5.9 2.2" stroke="#fff" stroke-width="1.15" fill="none"/></svg>
<div class="t" style="left:92.5px;top:483px;font-size:6.4px;line-height:10px;color:#222;">Pickup VFX plays when the player</div>
<div class="t" style="left:92.5px;top:490.7px;font-size:6.4px;line-height:10px;color:#222;">collected collectibles</div>
<div class="t" style="right:563.5px;top:491.5px;font-size:7.0px;line-height:10px;color:#222;">2</div>
<div class="t" style="right:481.8px;top:491.5px;font-size:7.0px;line-height:10px;color:#222;">1</div>
<div class="t" style="right:198.7px;top:491.5px;font-size:7.0px;line-height:10px;color:#222;">9/23</div>
<svg class="a" style="left:393.25px;top:488.05px" width="7.5" height="7.5" viewBox="0 0 7.5 7.5"><rect x="0.55" y="0.55" width="6.4" height="6.4" rx="0.9" fill="none" stroke="#737373" stroke-width="1.1"/></svg>
<svg class="a" style="left:452px;top:488.05px" width="7.5" height="7.5" viewBox="0 0 7.5 7.5"><rect x="0.55" y="0.55" width="6.4" height="6.4" rx="0.9" fill="none" stroke="#737373" stroke-width="1.1"/></svg>
<svg class="a" style="left:510.45px;top:488.05px" width="7.5" height="7.5" viewBox="0 0 7.5 7.5"><rect x="0" y="0" width="7.5" height="7.5" rx="1" fill="#727272"/><path d="M1.7 3.7 L3.1 5.1 L5.9 2.2" stroke="#fff" stroke-width="1.15" fill="none"/></svg>
<div class="t" style="left:33.8px;top:509.2px;font-size:7.0px;line-height:10px;color:#1a1a1a;transform:scaleX(0.86);transform-origin:0 0;font-weight:bold;">Sound</div>
<div class="t" style="left:92.5px;top:501.1px;font-size:6.4px;line-height:10px;color:#222;">Bite SFX plays when the player collided</div>
<div class="t" style="left:92.5px;top:508.8px;font-size:6.4px;line-height:10px;color:#222;">with an enemy.</div>
<div class="t" style="right:563.5px;top:509.6px;font-size:7.0px;line-height:10px;color:#222;">2</div>
<div class="t" style="right:481.8px;top:509.6px;font-size:7.0px;line-height:10px;color:#222;">1</div>
<div class="t" style="right:198.7px;top:509.6px;font-size:7.0px;line-height:10px;color:#222;">9/19</div>
<svg class="a" style="left:393.25px;top:506.1px" width="7.5" height="7.5" viewBox="0 0 7.5 7.5"><rect x="0.55" y="0.55" width="6.4" height="6.4" rx="0.9" fill="none" stroke="#737373" stroke-width="1.1"/></svg>
<svg class="a" style="left:452px;top:506.1px" width="7.5" height="7.5" viewBox="0 0 7.5 7.5"><rect x="0.55" y="0.55" width="6.4" height="6.4" rx="0.9" fill="none" stroke="#737373" stroke-width="1.1"/></svg>
<svg class="a" style="left:510.45px;top:506.1px" width="7.5" height="7.5" viewBox="0 0 7.5 7.5"><rect x="0" y="0" width="7.5" height="7.5" rx="1" fill="#727272"/><path d="M1.7 3.7 L3.1 5.1 L5.9 2.2" stroke="#fff" stroke-width="1.15" fill="none"/></svg>
<div class="t" style="left:92.5px;top:519.1px;font-size:6.4px;line-height:10px;color:#222;">Pickup SFX plays when the player</div>
<div class="t" style="left:92.5px;top:526.8px;font-size:6.4px;line-height:10px;color:#222;">collected collectibles</div>
<div class="t" style="right:563.5px;top:527.6px;font-size:7.0px;line-height:10px;color:#222;">2</div>
<div class="t" style="right:481.8px;top:527.6px;font-size:7.0px;line-height:10px;color:#222;">1</div>
<div class="t" style="right:198.7px;top:527.6px;font-size:7.0px;line-height:10px;color:#222;">9/19</div>
<svg class="a" style="left:393.25px;top:524.15px" width="7.5" height="7.5" viewBox="0 0 7.5 7.5"><rect x="0.55" y="0.55" width="6.4" height="6.4" rx="0.9" fill="none" stroke="#737373" stroke-width="1.1"/></svg>
<svg class="a" style="left:452px;top:524.15px" width="7.5" height="7.5" viewBox="0 0 7.5 7.5"><rect x="0.55" y="0.55" width="6.4" height="6.4" rx="0.9" fill="none" stroke="#737373" stroke-width="1.1"/></svg>
<svg class="a" style="left:510.45px;top:524.15px" width="7.5" height="7.5" viewBox="0 0 7.5 7.5"><rect x="0" y="0" width="7.5" height="7.5" rx="1" fill="#727272"/><path d="M1.7 3.7 L3.1 5.1 L5.9 2.2" stroke="#fff" stroke-width="1.15" fill="none"/></svg>
<div class="t" style="left:92.5px;top:536.8px;font-size:6.4px;line-height:10px;color:#222;">SFX of stone gate openning plays when</div>
<div class="t" style="left:92.5px;top:544.5px;font-size:6.4px;line-height:10px;color:#222;">the player reached the gate and have</div>
<div class="t" style="left:92.5px;top:552.2px;font-size:6.4px;line-height:10px;color:#222;">collected the key.</div>
<div class="t" style="right:563.5px;top:553px;font-size:7.0px;line-height:10px;color:#222;">2</div>
<div class="t" style="right:481.8px;top:553px;font-size:7.0px;line-height:10px;color:#222;">1</div>
<div class="t" style="right:198.7px;top:553px;font-size:7.0px;line-height:10px;color:#222;">9/19</div>
<svg class="a" style="left:393.25px;top:545.85px" width="7.5" height="7.5" viewBox="0 0 7.5 7.5"><rect x="0.55" y="0.55" width="6.4" height="6.4" rx="0.9" fill="none" stroke="#737373" stroke-width="1.1"/></svg>
<svg class="a" style="left:452px;top:545.85px" width="7.5" height="7.5" viewBox="0 0 7.5 7.5"><rect x="0.55" y="0.55" width="6.4" height="6.4" rx="0.9" fill="none" stroke="#737373" stroke-width="1.1"/></svg>
<svg class="a" style="left:510.45px;top:545.85px" width="7.5" height="7.5" viewBox="0 0 7.5 7.5"><rect x="0" y="0" width="7.5" height="7.5" rx="1" fill="#727272"/><path d="M1.7 3.7 L3.1 5.1 L5.9 2.2" stroke="#fff" stroke-width="1.15" fill="none"/></svg>
<div class="t" style="left:33.8px;top:562.8px;font-size:7.0px;line-height:10px;color:#1a1a1a;transform:scaleX(0.86);transform-origin:0 0;font-weight:bold;">Bugs</div>
<div class="t" style="left:92.5px;top:562.4px;font-size:6.4px;line-height:10px;color:#222;">Fix bugs in the game.</div>
<div class="t" style="right:563.5px;top:563.2px;font-size:7.0px;line-height:10px;color:#222;">1</div>
<div class="t" style="right:481.8px;top:563.2px;font-size:7.0px;line-height:10px;color:#222;">2</div>
<div class="t" style="right:198.7px;top:563.2px;font-size:7.0px;line-height:10px;color:#222;">10/14</div>
<svg class="a" style="left:393.25px;top:563.65px" width="7.5" height="7.5" viewBox="0 0 7.5 7.5"><rect x="0.55" y="0.55" width="6.4" height="6.4" rx="0.9" fill="none" stroke="#737373" stroke-width="1.1"/></svg>
<svg class="a" style="left:452px;top:563.65px" width="7.5" height="7.5" viewBox="0 0 7.5 7.5"><rect x="0.55" y="0.55" width="6.4" height="6.4" rx="0.9" fill="none" stroke="#737373" stroke-width="1.1"/></svg>
<svg class="a" style="left:510.45px;top:563.65px" width="7.5" height="7.5" viewBox="0 0 7.5 7.5"><rect x="0" y="0" width="7.5" height="7.5" rx="1" fill="#727272"/><path d="M1.7 3.7 L3.1 5.1 L5.9 2.2" stroke="#fff" stroke-width="1.15" fill="none"/></svg>
<div class="t" style="left:92.5px;top:572.8px;font-size:6.4px;line-height:10px;color:#222;">Compose the player script into</div>
<div class="t" style="left:92.5px;top:580.5px;font-size:6.4px;line-height:10px;color:#222;">respective task or function.</div>
<div class="t" style="right:563.5px;top:581.3px;font-size:7.0px;line-height:10px;color:#222;">2</div>
<div class="t" style="right:481.8px;top:581.3px;font-size:7.0px;line-height:10px;color:#222;">2</div>
<div class="t" style="right:198.7px;top:581.3px;font-size:7.0px;line-height:10px;color:#222;">10/12</div>
<svg class="a" style="left:393.25px;top:577.8px" width="7.5" height="7.5" viewBox="0 0 7.5 7.5"><rect x="0.55" y="0.55" width="6.4" height="6.4" rx="0.9" fill="none" stroke="#737373" stroke-width="1.1"/></svg>
<svg class="a" style="left:452px;top:577.8px" width="7.5" height="7.5" viewBox="0 0 7.5 7.5"><rect x="0.55" y="0.55" width="6.4" height="6.4" rx="0.9" fill="none" stroke="#737373" stroke-width="1.1"/></svg>
<svg class="a" style="left:510.45px;top:577.8px" width="7.5" height="7.5" viewBox="0 0 7.5 7.5"><rect x="0" y="0" width="7.5" height="7.5" rx="1" fill="#727272"/><path d="M1.7 3.7 L3.1 5.1 L5.9 2.2" stroke="#fff" stroke-width="1.15" fill="none"/></svg>
</body></html>
